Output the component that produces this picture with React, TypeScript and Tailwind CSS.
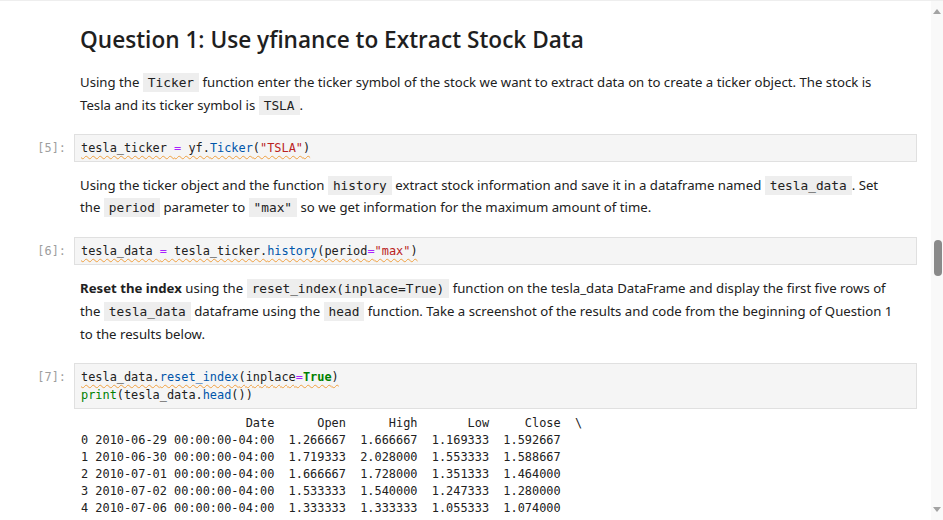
import React from "react";

const Code = ({ children }: { children: React.ReactNode }) => (
  <code className="font-['DejaVu_Sans_Mono',monospace] text-[12.8px] leading-none bg-[#eeeeee] px-[5px] py-[2px] text-[#212121]">
    {children}
  </code>
);

const Prompt = ({ n }: { n: number }) => (
  <div className="w-[74px] shrink-0 pr-[8px] pt-[5px] text-right font-['DejaVu_Sans_Mono',monospace] text-[11.9px] leading-[18px] text-[#9e9e9e]">
    [{n}]:
  </div>
);

const Line = ({ children }: { children: React.ReactNode }) => (
  <div className="whitespace-pre">
    <span className="underline decoration-wavy decoration-[#f0a040] decoration-1 underline-offset-[3px] [text-decoration-skip-ink:none]">
      {children}
    </span>
  </div>
);

const CodeCell = ({ n, children }: { n: number; children: React.ReactNode }) => (
  <div className="flex">
    <Prompt n={n} />
    <div className="flex-1 border border-[#e0e0e0] bg-[#f5f5f5] px-[6px] py-[4px] font-['DejaVu_Sans_Mono',monospace] text-[11.9px] leading-[18px] text-[#212121]">
      {children}
    </div>
  </div>
);

const op = "text-[#aa22ff]";
const str = "text-[#ba2121]";
const prop = "text-[#0055aa]";
const kw = "text-[#008000]";

export default function App() {
  const output = [
    "                       Date      Open      High       Low     Close  \\",
    "0 2010-06-29 00:00:00-04:00  1.266667  1.666667  1.169333  1.592667",
    "1 2010-06-30 00:00:00-04:00  1.719333  2.028000  1.553333  1.588667",
    "2 2010-07-01 00:00:00-04:00  1.666667  1.728000  1.351333  1.464000",
    "3 2010-07-02 00:00:00-04:00  1.533333  1.540000  1.247333  1.280000",
    "4 2010-07-06 00:00:00-04:00  1.333333  1.333333  1.055333  1.074000",
  ];
  return (
    <div className="flex w-[943px] h-[520px] overflow-hidden bg-white border-t border-[#eeeeee] font-['Noto_Sans',sans-serif] text-[#212121]">
      <div className="flex-1 pr-[14px]">
        {/* Heading */}
        <div className="pl-[80px] pt-[23px] font-['Open_Sans',sans-serif] text-[22.6px] leading-[32px] font-semibold text-[#1f1f1f]">
          Question 1: Use yfinance to Extract Stock Data
        </div>
        <div className="pl-[80px] pr-[16px] pt-[15px] text-[13.2px] leading-[22.6px]">
          Using the <Code>Ticker</Code> function enter the ticker symbol of the stock we want to extract data on to create a ticker object. The stock is Tesla and its ticker symbol is <Code>TSLA</Code>.
        </div>
        <div className="mt-[18px]">
          <CodeCell n={5}>
            <Line>
              tesla_ticker <span className={op}>=</span> yf.<span className={prop}>Ticker</span>(<span className={str}>"TSLA"</span>)
            </Line>
          </CodeCell>
        </div>
        <div className="pl-[80px] pr-[16px] pt-[11.5px] text-[13.2px] leading-[22.6px]">
          Using the ticker object and the function <Code>history</Code> extract stock information and save it in a dataframe named <Code>tesla_data</Code>. Set the <Code>period</Code> parameter to <Code>"max"</Code> so we get information for the maximum amount of time.
        </div>
        <div className="mt-[18px]">
          <CodeCell n={6}>
            <Line>
              tesla_data <span className={op}>=</span> tesla_ticker.<span className={prop}>history</span>(period<span className={op}>=</span><span className={str}>"max"</span>)
            </Line>
          </CodeCell>
        </div>
        <div className="pl-[80px] pr-[16px] pt-[12.5px] text-[13.2px] leading-[22.6px]">
          <b className="font-bold">Reset the index</b> using the <Code>reset_index(inplace=True)</Code> function on the tesla_data DataFrame and display the first five rows of the <Code>tesla_data</Code> dataframe using the <Code>head</Code> function. Take a screenshot of the results and code from the beginning of Question 1 to the results below.
        </div>
        <div className="mt-[17.5px]">
          <CodeCell n={7}>
            <Line>
              tesla_data.<span className={prop}>reset_index</span>(inplace<span className={op}>=</span><span className={`${kw} font-bold`}>True</span>)
            </Line>
            <div className="whitespace-pre">
              <span className={kw}>print</span>(tesla_data.<span className={prop}>head</span>())
            </div>
          </CodeCell>
        </div>
        <pre className="pl-[81px] pt-[6px] font-['DejaVu_Sans_Mono',monospace] text-[11.9px] leading-[17px] text-[#212121]">
          {output.join("\n")}
        </pre>
      </div>
      {/* Scrollbar */}
      <div className="relative w-[12px] shrink-0 bg-[#f9f9f9]">
        <div className="absolute left-[2px] top-[8px] w-0 h-0 border-l-[4px] border-r-[4px] border-b-[5px] border-l-transparent border-r-transparent border-b-[#a3a3a3]" />
        <div className="absolute left-[3px] top-[239px] w-[8px] h-[36px] rounded-full bg-[#8a8a8a]" />
        <div className="absolute left-[2px] top-[506px] w-0 h-0 border-l-[4px] border-r-[4px] border-t-[5px] border-l-transparent border-r-transparent border-t-[#a3a3a3]" />
      </div>
    </div>
  );
}
